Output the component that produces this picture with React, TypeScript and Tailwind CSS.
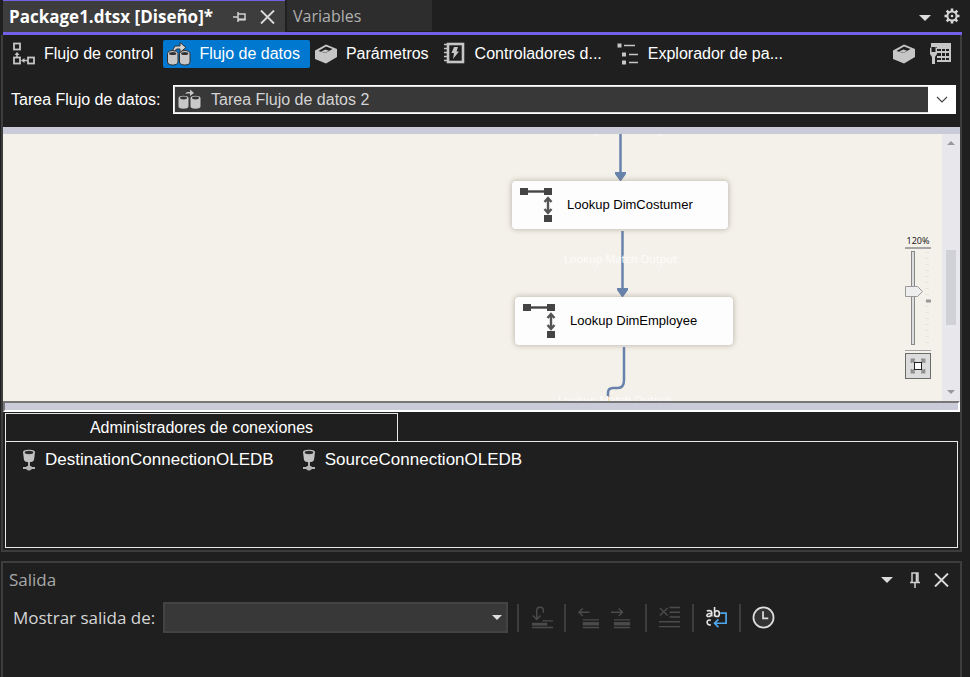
import React, { useState } from "react";

const ARIAL = "font-['Liberation_Sans',Arial,sans-serif]";
const SEGOE = "font-['Open_Sans','Noto_Sans',sans-serif]";

type IconProps = { className?: string };

function ControlFlowIcon() {
  return (
    <svg width="24" height="24" viewBox="0 0 24 24" fill="none" stroke="#c5c5c5" strokeWidth="1.8" aria-hidden="true">
      <rect x="2" y="1.500" width="6" height="6" />
      <rect x="2" y="15.500" width="6" height="6" />
      <rect x="16" y="15.500" width="6" height="6" />
      <path d="M5 15v-4M11 18.500h4" strokeWidth="1.600" />
      <path d="M2.500 13L5 10l2.500 3zM12.500 16v5l-3.500-2.500z" fill="#c5c5c5" stroke="none" />
    </svg>
  );
}

function DataFlowIcon({ className }: IconProps) {
  return (
    <svg className={className} width="24" height="24" viewBox="0 0 24 24" fill="none" aria-hidden="true">
      <path d="M.5 11.500c0-4 10.500-4 10.500 0v8.500c0 4-10.500 4-10.500 0zM12.500 11.500c0-4 10.500-4 10.500 0v8.500c0 4-10.500 4-10.500 0z" fill="#c8c8c8" stroke="#303030" strokeWidth="1" />
      <ellipse cx="5.700" cy="11.500" rx="3.600" ry="1.500" fill="#333" />
      <ellipse cx="17.700" cy="11.500" rx="3.600" ry="1.500" fill="#333" />
      <path d="M5.500 8.500L8 4h5V.5L19 5.500l-6 5V7H9.500L8 9z" fill="#d2d2d2" stroke="#303030" strokeWidth="1" />
    </svg>
  );
}

function SmallDataFlowIcon({ className }: IconProps) {
  return (
    <svg className={className} width="24" height="24" viewBox="0 0 24 24" fill="none" aria-hidden="true">
      <path d="M1.500 11c0-3 10-3 10 0v8.500c0 3-10 3-10 0zM13.500 11c0-3 10-3 10 0v8.500c0 3-10 3-10 0z" fill="#c8c8c8" />
      <ellipse cx="6.500" cy="11" rx="3.500" ry="1.400" fill="#333" />
      <ellipse cx="18.500" cy="11" rx="3.500" ry="1.400" fill="#333" />
      <path d="M8 7l2-2h3V2.500L17 6l-4 3V6.500h-3z" fill="#c8c8c8" />
    </svg>
  );
}

function BoxIcon() {
  return (
    <svg width="24" height="24" viewBox="0 0 24 24" fill="none" aria-hidden="true">
      <path d="M1 8.500L12 2.500l11 4.500v8L12 21.500 1 17z" fill="#c6c6c6" />
      <path d="M4.500 9L12 4.500 18.500 7 11.500 11z" fill="#1f1f1f" />
      <path d="M7 9.500l4.500-2 3.500 1.200-3.500 2z" fill="#c6c6c6" />
    </svg>
  );
}

function EventHandlerIcon() {
  return (
    <svg width="24" height="24" viewBox="0 0 24 24" fill="none" aria-hidden="true">
      <rect x="5" y="2" width="15" height="18" stroke="#c6c6c6" strokeWidth="2.600" />
      <path d="M1 2.500h3M1 6.500h3M1 10.500h3M1 14.500h3M1 18.500h3" stroke="#c6c6c6" strokeWidth="1.500" />
      <path d="M11 5h4l-1.500 4.500H16L10 17l1-6H8.500z" fill="#c6c6c6" />
    </svg>
  );
}

function TreeIcon() {
  return (
    <svg width="24" height="24" viewBox="0 0 24 24" fill="none" stroke="#c6c6c6" aria-hidden="true">
      <path d="M1.500 1.500h4v4h-4zM6 10.500h4v4H6zM6 18.500h4v4H6z" fill="#c6c6c6" stroke="none" />
      <path d="M8 3.500h11M13 12.500h9M13 20.500h9" strokeWidth="1.600" />
    </svg>
  );
}

function TableWrenchIcon() {
  return (
    <svg width="24" height="24" viewBox="0 0 24 24" fill="none" aria-hidden="true">
      <path d="M3 1h20v19H9V12H3z" fill="#c6c6c6" />
      <path d="M9 7h4v2H9zM14 7h3v2h-3zM18 7h3v2h-3zM9 11h4v3H9zM14 11h3v3h-3zM18 11h3v3h-3zM9 16h4v2H9zM14 16h3v2h-3zM18 16h3v2h-3z" fill="#1f1f1f" />
      <path d="M2 5h7v16H2z" fill="#1f1f1f" />
      <path d="M2 6v6l2 3v7h3v-7l2-3V6L7.500 5v5h-4V5z" fill="#c6c6c6" />
    </svg>
  );
}

function GearIcon() {
  return (
    <svg width="16" height="16" viewBox="0 0 16 16" fill="none" stroke="#d6d6d6" aria-hidden="true">
      <circle cx="8" cy="8" r="4.600" strokeWidth="2" />
      <circle cx="8" cy="8" r="1.300" fill="#d6d6d6" stroke="none" />
      <path d="M8 .5v3M8 12.500v3M.5 8h3M12.500 8h3M2.700 2.700l2 2M11.300 11.300l2 2M13.300 2.700l-2 2M2.700 13.300l2-2" strokeWidth="2.600" />
    </svg>
  );
}

function CaretIcon() {
  return (
    <svg width="12" height="6" viewBox="0 0 12 6" aria-hidden="true">
      <path d="M0 0h12L6 6z" fill="#dcdcdc" />
    </svg>
  );
}

function CloseIcon() {
  return (
    <svg width="15" height="14" viewBox="0 0 15 14" aria-hidden="true">
      <path d="M1 .5l13 13M14 .5l-13 13" stroke="#dadada" strokeWidth="1.900" />
    </svg>
  );
}

function PinIcon() {
  return (
    <svg width="12" height="16" viewBox="0 0 12 16" fill="none" stroke="#d0d0d0" aria-hidden="true">
      <path d="M3 10V1h6v9M1 10.500h10M6 11v5" strokeWidth="1.500" />
      <path d="M7.700 1v9" strokeWidth="2" />
    </svg>
  );
}

function SidePinIcon() {
  return (
    <svg width="13" height="12" viewBox="0 0 13 12" fill="none" stroke="#d0d0d0" aria-hidden="true">
      <path d="M0 6h5M5 1v10M5 3h7v6" strokeWidth="1.500" />
      <path d="M5 8.500h7.500" strokeWidth="2.200" />
    </svg>
  );
}

function ConnectionIcon() {
  return (
    <svg width="14" height="22" viewBox="0 0 14 22" aria-hidden="true">
      <path d="M1 3c0-3 12-3 12 0l-1 8c-1 3-9 3-10 0z" fill="#c3c3c3" />
      <ellipse cx="7" cy="3.500" rx="4.300" ry="1.700" fill="#2b2b2b" />
      <path d="M6 13h2v4h1l1 1h3v2h-3l-2 1.500H6L4 20H1v-2h3l1-1h1z" fill="#b5b5b5" />
    </svg>
  );
}

function LookupIcon() {
  return (
    <svg width="34" height="36" viewBox="0 0 34 36" aria-hidden="true">
      <path d="M0 1h8v7H0zM24 1h8v7h-8zM24 28h8v7h-8z" fill="#444" />
      <path d="M8 4.500h17" stroke="#444" strokeWidth="2.400" />
      <path d="M28 12v13M24.500 15l3.500-4 3.500 4M24.500 22l3.500 4 3.500-4" stroke="#555" strokeWidth="2.400" fill="none" />
    </svg>
  );
}

function LookupNode({ label, place }: { label: string; place: string }) {
  return (
    <div className={`absolute flex h-12 items-center rounded-sm bg-[#fdfdfe] pl-2 text-[13px] text-black shadow-[0_0_5px_1px_rgba(110,100,80,0.35)] ${place}`}>
      <LookupIcon />
      <span className="ml-[13px]">{label}</span>
    </div>
  );
}

function ViewTab({ icon, label, active = false }: { icon: React.ReactNode; label: string; active?: boolean }) {
  return (
    <button
      type="button"
      className={`flex h-7 items-center gap-2 rounded-xs pr-[10px] pl-1 whitespace-nowrap text-white ${active ? "bg-[#0078d0]" : ""}`}
    >
      {icon}
      {label}
    </button>
  );
}

function ZoomControl() {
  const [zoom, setZoom] = useState(120);
  return (
    <div className="absolute top-[100px] right-[29px] flex w-[26px] flex-col items-center">
      <span className="h-[13px] font-['Noto_Sans',sans-serif] text-[9px] leading-[13px] text-[#222]">{zoom}%</span>
      <div className="h-[2px] w-full bg-[#a5a5a5]" />
      <div className="relative h-[100px] w-full">
        <svg width="26" height="100" viewBox="0 0 26 100" aria-hidden="true">
          <rect x="6.500" y="2.500" width="3" height="93" fill="#ddd" stroke="#888" />
          <path d="M22 3v94" stroke="#e8e5df" strokeWidth="4" strokeDasharray="1 5" />
          <path d="M21 52h5" stroke="#999" strokeWidth="3" />
          <path d="M.5 37.500h12l5 5-5 5H.5z" fill="#eee" stroke="#999" />
        </svg>
        <input
          type="range"
          aria-label="Zoom"
          min={20}
          max={200}
          value={zoom}
          onChange={(e) => setZoom(Number(e.target.value))}
          className="absolute inset-0 h-full w-full cursor-pointer opacity-0 [direction:rtl] [writing-mode:vertical-lr]"
        />
      </div>
      <div className="mt-px h-px w-full bg-[#a5a5a5]" />
      <button type="button" aria-label="Ajustar" className="mt-[2px] flex h-[26px] w-full items-center justify-center border border-[#6b6b6b] bg-[#dcdcdc]">
        <svg width="16" height="16" viewBox="0 0 16 16" fill="none">
          <path d="M1.500 5V1.500H5M11 1.500h3.500V5M14.500 11v3.500H11M5 14.500H1.500V11M2 2l3 3M14 2l-3 3M2 14l3-3M14 14l-3-3" stroke="#909090" strokeWidth="1.800" />
          <rect x="4.500" y="4.500" width="7" height="7" fill="#fff" stroke="#222" />
        </svg>
      </button>
    </div>
  );
}

function DesignCanvas() {
  return (
    <div className="flex h-[267px] bg-[#f4f1ea]">
      <div className="relative min-w-0 flex-1 overflow-hidden">
        <svg className="absolute top-0 left-0" width="800" height="267" viewBox="0 0 800 267" fill="none" stroke="#6883ab" strokeWidth="2.500" aria-hidden="true">
          <path d="M617.500 0v40M619.500 97v60M621 213v33c0 6-2 8-6 8h-5c-4 0-5 3-5 5v4" />
          <path d="M612 38h11v2l-5 7h-1l-5-7zM614 154h11v2l-5 7h-1l-5-7z" fill="#6883ab" stroke="none" />
          <path d="M605.500 263v4" stroke="#f3cda4" strokeWidth="1" />
        </svg>
        <div className="font-['Noto_Sans',sans-serif] text-[11px] leading-[16px] whitespace-nowrap text-[#fdfcfa]">
          <span className="absolute top-[-12px] left-[559px]">Lookup Match Output</span>
          <span className="absolute top-[117px] left-[561px]">Lookup Match Output</span>
          <span className="absolute top-[258px] left-[555px]">Lookup Match Output</span>
        </div>
        <LookupNode label="Lookup DimCostumer" place="top-[47px] left-[509px] w-[216px]" />
        <LookupNode label="Lookup DimEmployee" place="top-[163px] left-[512px] w-[218px]" />
        <div className="absolute inset-y-0 right-0 w-0">
          <div className="absolute top-0 right-[-18px]">
            <ZoomControl />
          </div>
        </div>
      </div>
      <div className="flex w-[18px] flex-col items-center bg-[#e8e8ec] py-[7px]">
        <svg width="8" height="4" viewBox="0 0 8 4" aria-hidden="true"><path d="M0 4h8L4 0z" fill="#999" /></svg>
        <div className="mt-[105px] h-[75px] w-[10px] bg-[#d0d1d7]" />
        <svg className="mt-auto" width="8" height="4" viewBox="0 0 8 4" aria-hidden="true"><path d="M0 0h8L4 4z" fill="#999" /></svg>
      </div>
    </div>
  );
}

function ToolButton({ label, children }: { label: string; children: React.ReactNode }) {
  return (
    <button type="button" aria-label={label} className="flex h-6 w-[23px] items-center justify-center">
      <svg width="23" height="23" viewBox="0 0 24 24" fill="none" stroke="#4b4b4b" strokeWidth="1.500">
        {children}
      </svg>
    </button>
  );
}

function Divider() {
  return <div className="h-7 w-[2px] bg-[#3d3d3d]" />;
}

export default function App() {
  return (
    <div className={`flex min-h-screen flex-col bg-[#1f1f1f] pr-2 pl-px text-[16px] leading-[20px] ${ARIAL}`}>
      <section>
        <div className="ml-[2px] flex h-8 items-start gap-[2px]">
          <div className={`flex h-8 w-[282px] items-center border-t border-[#7160e8] bg-[#3d3d3d] pr-[10px] pl-[6px] text-[17px] font-bold whitespace-nowrap text-white ${SEGOE}`}>
            <button type="button">Package1.dtsx [Diseño]*</button>
            <button type="button" aria-label="Anclar" className="ml-auto"><SidePinIcon /></button>
            <button type="button" aria-label="Cerrar" className="ml-[14px]"><CloseIcon /></button>
          </div>
          <button type="button" className={`h-[31px] w-[145px] bg-[#2d2d2d] pl-[6px] text-left text-[16px] text-[#b0b0b0] ${SEGOE}`}>Variables</button>
          <div className="mr-[2px] ml-auto flex h-8 items-center gap-[13px]">
            <button type="button" aria-label="Lista de ventanas" className="mt-1"><CaretIcon /></button>
            <button type="button" aria-label="Opciones"><GearIcon /></button>
          </div>
        </div>
        <div className="ml-[2px] h-[3px] bg-[#7160e8]" />

        <div className="border-x-2 border-b-2 border-[#3d3d3d]">
          <nav className="flex items-center pt-[5px] pr-2 pl-[5px]">
            <ViewTab icon={<ControlFlowIcon />} label="Flujo de control" />
            <ViewTab icon={<DataFlowIcon />} label="Flujo de datos" active />
            <ViewTab icon={<BoxIcon />} label="Parámetros" />
            <ViewTab icon={<EventHandlerIcon />} label="Controladores d..." />
            <ViewTab icon={<TreeIcon />} label="Explorador de pa..." />
            <div className="ml-auto flex gap-3">
              <button type="button" aria-label="Variables"><BoxIcon /></button>
              <button type="button" aria-label="Propiedades"><TableWrenchIcon /></button>
            </div>
          </nav>

          <div className="mt-[17px] flex items-center pr-1 pl-2">
            <label htmlFor="task" className="w-[162px] text-white">Tarea Flujo de datos:</label>
            <div className="relative flex-1">
              <select id="task" className="block h-[29px] w-full appearance-none border border-white bg-[#383838] pl-[37px] text-[#d4d4d4] outline-1 -outline-offset-2 outline-[#dddddd]">
                <option>Tarea Flujo de datos 2</option>
              </select>
              <SmallDataFlowIcon className="pointer-events-none absolute top-[2px] left-1" />
              <span className="pointer-events-none absolute inset-y-0 right-0 flex w-7 items-center justify-center bg-white">
                <svg width="12" height="8" viewBox="0 0 12 8" fill="none" aria-hidden="true"><path d="M1 1l5 5 5-5" stroke="#444" strokeWidth="1.200" /></svg>
              </span>
            </div>
          </div>

          <div className="mt-[13px] h-[7px] bg-[#c9cbd9]" />
          <DesignCanvas />
          <div className="h-[11px] border-2 border-t-[#777] border-r-white border-b-white border-l-[#777] bg-[#c9cbd9]" />

          <div className="px-[2px] pt-px pb-[2px]">
            <h2 className="h-[28px] w-[393px] border border-b-0 border-[#e8e8e8] text-center leading-[28px] text-white">Administradores de conexiones</h2>
            <ul className="flex h-[107px] items-start gap-7 border border-[#e8e8e8] pt-[7px] pl-4 text-[17px] text-white">
              <li className="flex items-center gap-[9px]"><ConnectionIcon />DestinationConnectionOLEDB</li>
              <li className="flex items-center gap-[9px]"><ConnectionIcon />SourceConnectionOLEDB</li>
            </ul>
          </div>
        </div>
      </section>

      <section className={`mt-[9px] flex-1 border-2 border-b-0 border-[#3d3d3d] ${SEGOE}`}>
        <header className="flex h-[34px] items-center pr-[11px] pl-[6px]">
          <h2 className="text-[17px] text-[#a8a8a8]">Salida</h2>
          <div className="ml-auto flex items-center">
            <button type="button" aria-label="Menú"><CaretIcon /></button>
            <button type="button" aria-label="Ocultar" className="ml-4"><PinIcon /></button>
            <button type="button" aria-label="Cerrar salida" className="ml-[13px]"><CloseIcon /></button>
          </div>
        </header>
        <div className="mt-[5px] flex h-[31px] items-center pl-[10px]">
          <label htmlFor="output" className="w-[150px] text-[17px] whitespace-nowrap text-[#d6d6d6]">Mostrar salida de:</label>
          <div className="relative w-[345px]">
            <select id="output" className="block h-[31px] w-full appearance-none border-2 border-[#434343] bg-[#383838]" />
            <span className="pointer-events-none absolute top-[13px] right-[6px]">
              <svg width="10" height="5" viewBox="0 0 10 5" aria-hidden="true"><path d="M0 0h10L5 5z" fill="#dcdcdc" /></svg>
            </span>
          </div>
          <div className="ml-[9px] flex items-center gap-[11px]">
            <Divider />
            <ToolButton label="Buscar mensaje">
              <path d="M7 13V5c0-5 7-5 7 0v2M3 10l4 4 4-4M13 15.500h11M2 22.500h22" />
              <path d="M2 19h16" strokeWidth="3" />
            </ToolButton>
            <Divider />
            <ToolButton label="Mensaje anterior">
              <path d="M13 6.500H2M6 2.500l-4 4 4 4M6 14.500h17M6 22.500h17" />
              <path d="M6 18.500h17" strokeWidth="3.500" />
            </ToolButton>
            <ToolButton label="Mensaje siguiente">
              <path d="M0 6.500h12M8 2.500l4 4-4 4M3 14.500h17M3 22.500h17" />
              <path d="M3 18.500h17" strokeWidth="3.500" />
            </ToolButton>
            <Divider />
            <ToolButton label="Borrar todo">
              <path d="M2 2l8 8M10 2l-8 8M12 1.500h11M12 6.500h11M12 11.500h11M1 16.500h22M1 21.500h22" />
            </ToolButton>
            <Divider />
            <ToolButton label="Ajuste de línea">
              <g stroke="#e4e4e4" strokeWidth="1.700">
                <path d="M2 5.500c1-1 5-1 5 1V11M7 8C1 7 1 11 3.500 11 5 11 7 10 7 8M10 1v10M10 8c0-4 5-4 5 0s-5 4-5 0M6 15c-5-2-5 6 0 4.500" />
              </g>
              <path d="M16 7.500h6V18H10M14 14l-4 4 4 4" stroke="#4ea6ea" strokeWidth="1.800" />
            </ToolButton>
            <Divider />
            <ToolButton label="Marca de tiempo">
              <circle cx="12" cy="12" r="10.500" stroke="#dedede" fill="#333" strokeWidth="1.800" />
              <path d="M11.500 5.500V13H17" stroke="#dedede" strokeWidth="1.800" />
            </ToolButton>
          </div>
        </div>
      </section>
    </div>
  );
}
